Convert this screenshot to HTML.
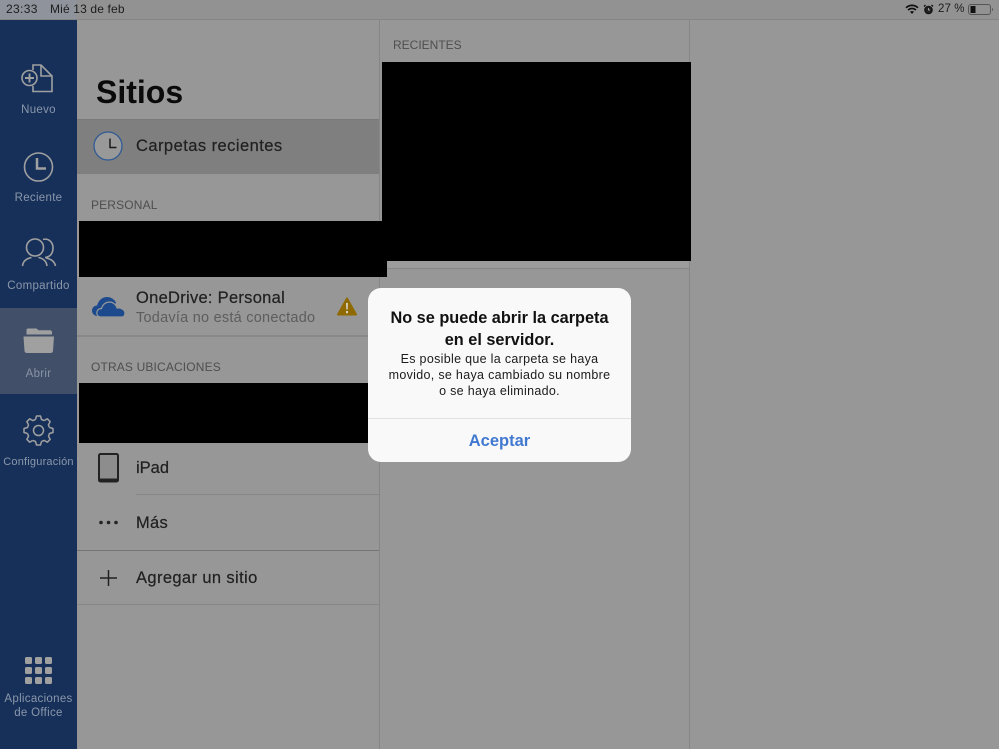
<!DOCTYPE html>
<html><head><meta charset="utf-8"><style>
html,body{margin:0;padding:0}
body{width:999px;height:749px;overflow:hidden;position:relative;background:#979797;font-family:"Liberation Sans",sans-serif;color:#1e1e1e}
.a{position:absolute;white-space:nowrap}
.side{left:0;top:20px;width:77px;height:729px;background:#16305a}
.lab{position:absolute;left:0;width:77px;text-align:center;font-size:11.5px;line-height:14px;color:#8b97aa;letter-spacing:.3px;white-space:nowrap}
.t{font-size:16.5px;line-height:20px;color:#202020;-webkit-text-stroke:.2px #202020}
.h{font-size:12px;line-height:14px;color:#4e4e4e;letter-spacing:.15px}
svg{position:absolute;overflow:visible}
</style></head><body>
<div class="a" style="left:0;top:0;width:999px;height:19px;background:#929292"></div>
<div class="a" style="left:0;top:0;width:77px;height:20px;background:#8f949c"></div>
<div class="a" style="left:0;top:19px;width:999px;height:1px;background:#858585"></div>
<div class="a" style="left:6px;top:2px;font-size:12px;line-height:14px;color:#1c1c1c;letter-spacing:.35px">23:33</div>
<div class="a" style="left:50px;top:2px;font-size:12px;line-height:14px;color:#1c1c1c;letter-spacing:.15px">Mié 13 de feb</div>
<div class="a" style="left:938px;top:2px;font-size:11.5px;line-height:14px;color:#1c1c1c;letter-spacing:.1px">27 %</div>
<svg style="left:905px;top:4px" width="14" height="11" viewBox="0 0 14 11"><path d="M1 3.800C4.500.6 9.500.6 13 3.800M3 6c2.500-2 5.500-2 8 0" fill="none" stroke="#111" stroke-width="1.700"/><path d="M5 7.800c1.200-.9 2.800-.9 4 0L7 10z" fill="#111"/></svg>
<svg style="left:923px;top:4px" width="11" height="11" viewBox="0 0 11 11"><circle cx="5.500" cy="6" r="3.700" fill="#222" stroke="#111" stroke-width="1.200"/><path d="M1 2.500 2.500 1M10 2.500 8.500 1" stroke="#111" stroke-width="1.400"/><path d="M5.500 4v2h1.500" stroke="#999" fill="none"/></svg>
<svg style="left:968px;top:4px" width="26" height="12" viewBox="0 0 26 12"><rect x=".5" y=".5" width="22" height="10" rx="2.500" fill="none" stroke="#555"/><rect x="2.500" y="2" width="5" height="7" fill="#111"/><path d="M24 4v3c.8-.3 1-.8 1-1.500s-.2-1.200-1-1.500z" fill="#555"/></svg>

<div class="a side"></div>
<div class="a" style="left:0;top:308px;width:77px;height:86px;background:#414f69"></div>
<svg style="left:0;top:0" width="77" height="300" viewBox="0 0 77 300" fill="none" stroke="#a0a0a0" stroke-width="1.600">
<path d="M33 70V65H41L52 76V91.500H33V86"/><path d="M41 65V76H52"/>
<circle cx="29.500" cy="78" r="7.500"/><path d="M29.500 73.500v9M25 78h9" stroke-width="1.900"/>
<circle cx="38.500" cy="167" r="14"/><path d="M37 158v10.500h9" stroke-width="2.500"/>
<circle cx="35" cy="247.500" r="8.500"/><path d="M43 239.500c5-1.500 10 2 10 8.500s-4 9-8 9.500"/>
<path d="M22.500 266c.5-5 4-7.500 9-8.500M38.500 257.500c5 1 8 4 8.500 8.500M46 258c4 .8 8.500 3 9.500 8"/>
</svg>
<div class="lab" style="top:103px">Nuevo</div>
<div class="lab" style="top:191px">Reciente</div>
<div class="lab" style="top:279px">Compartido</div>
<svg style="left:23px;top:328px" width="32" height="26" viewBox="0 0 32 26"><path d="M3.500 6.500V2Q3.500 .5 5 .5h8.500l2 1.800H27q2 0 2 2v2.200z" fill="#a0a0a0"/><path d="M.5 8.500h30.500l-1 14.500q-.2 2-2.500 2H4Q1.700 25 1.500 23z" fill="#a0a0a0"/></svg>
<div class="lab" style="top:367px;color:#8a93a5">Abrir</div>
<svg style="left:23px;top:415px" width="31" height="31" viewBox="-15.500 -15.500 31 31" fill="none" stroke="#a0a0a0" stroke-width="1.500" stroke-linejoin="round">
<path d="M-3-11-2-14.500H2L3-11 5.660-9.900"/>
<path d="M-3-11-2-14.500H2L3-11 5.660-9.900" transform="rotate(45)"/>
<path d="M-3-11-2-14.500H2L3-11 5.660-9.900" transform="rotate(90)"/>
<path d="M-3-11-2-14.500H2L3-11 5.660-9.900" transform="rotate(135)"/>
<path d="M-3-11-2-14.500H2L3-11 5.660-9.900" transform="rotate(180)"/>
<path d="M-3-11-2-14.500H2L3-11 5.660-9.900" transform="rotate(225)"/>
<path d="M-3-11-2-14.500H2L3-11 5.660-9.900" transform="rotate(270)"/>
<path d="M-3-11-2-14.500H2L3-11 5.660-9.900" transform="rotate(315)"/>
<circle r="5"/></svg>
<div class="lab" style="top:455px;font-size:11px;letter-spacing:.2px">Configuración</div>
<svg style="left:25px;top:657px" width="27" height="27" viewBox="0 0 27 27" fill="#a0a0a0"><rect width="7" height="7" rx="1.500"/><rect x="10" width="7" height="7" rx="1.500"/><rect x="20" width="7" height="7" rx="1.500"/><rect y="10" width="7" height="7" rx="1.500"/><rect x="10" y="10" width="7" height="7" rx="1.500"/><rect x="20" y="10" width="7" height="7" rx="1.500"/><rect y="20" width="7" height="7" rx="1.500"/><rect x="10" y="20" width="7" height="7" rx="1.500"/><rect x="20" y="20" width="7" height="7" rx="1.500"/></svg>
<div class="lab" style="top:692px">Aplicaciones<br>de Office</div>

<div class="a" style="left:379px;top:20px;width:1px;height:729px;background:#868686"></div>
<div class="a" style="left:689px;top:20px;width:1px;height:729px;background:#868686"></div>

<div class="a" style="left:96px;top:73px;font-size:32px;line-height:38px;font-weight:bold;color:#0a0a0a">Sitios</div>
<div class="a" style="left:77px;top:119px;width:302px;height:1px;background:#7a7a7a"></div>
<div class="a" style="left:77px;top:120px;width:302px;height:54px;background:#7f7f7f"></div>
<svg style="left:93px;top:131px" width="30" height="30" viewBox="0 0 30 30" fill="#999"><circle cx="15" cy="15" r="14" stroke="#2f5b96" stroke-width="1.300"/><path d="M17 7.500v9h6.500" fill="none" stroke="#1a1a1a" stroke-width="1.500"/></svg>
<div class="a t" style="left:136px;top:136px;letter-spacing:.45px">Carpetas recientes</div>
<div class="a h" style="left:91px;top:198px">PERSONAL</div>
<div class="a" style="left:79px;top:221px;width:308px;height:56px;background:#000"></div>

<svg style="left:92px;top:297px" width="33" height="20" viewBox="0 0 33 20" fill="#1d4a8c"><path d="M6 19C2 19 0 16.500 0 13.500 0 10.500 2.500 8.500 5 8.500 6.500 3.500 10 0 15 0 19 0 22 2 24 5.500L20 14 8 19z"/><path d="M9 20C6 20 4.800 18 4.800 16 4.800 13.500 6.500 11.500 9.500 11.500 10.500 7.500 14 5 17.500 5 21 5 24 7.500 25 11 29.500 10.500 33 13 33 16.500 33 18.500 31.500 20 29.500 20z" stroke="#979797" stroke-width="1.200"/></svg>
<div class="a t" style="left:136px;top:288px;letter-spacing:.28px">OneDrive: Personal</div>
<div class="a" style="left:136px;top:309px;font-size:14.5px;line-height:18px;color:#5d5d5d;letter-spacing:.24px">Todavía no está conectado</div>
<svg style="left:337px;top:297px" width="20" height="19" viewBox="0 0 20 19"><path d="M10 1.500 19 17.500H1z" fill="#8f6a00" stroke="#8f6a00" stroke-width="2" stroke-linejoin="round"/><path d="M9 6h2l-.3 6.500H9.300zM9 14h2v2.200H9z" fill="#d6d0c0"/></svg>
<div class="a" style="left:77px;top:335px;width:302px;height:2px;background:#888"></div>
<div class="a h" style="left:91px;top:360px">OTRAS UBICACIONES</div>
<div class="a" style="left:79px;top:383px;width:300px;height:60px;background:#000"></div>

<svg style="left:97px;top:453px" width="22" height="30" viewBox="0 0 22 30"><rect x="2" y="1" width="19" height="27.500" rx="1.500" fill="#8d8d8d" stroke="#222" stroke-width="2"/><rect y="25.500" x="2" width="19" height="3" fill="#222"/></svg>
<div class="a t" style="left:136px;top:458px">iPad</div>
<div class="a" style="left:136px;top:494px;width:243px;height:1px;background:#868686"></div>
<svg style="left:99px;top:520px" width="19" height="5" viewBox="0 0 19 5" fill="#222"><circle cx="2" cy="2.500" r="1.800"/><circle cx="9.500" cy="2.500" r="1.800"/><circle cx="17" cy="2.500" r="1.800"/></svg>
<div class="a t" style="left:136px;top:513px;letter-spacing:.3px">Más</div>
<div class="a" style="left:77px;top:550px;width:302px;height:1px;background:#747474"></div>
<svg style="left:100px;top:570px" width="17" height="17" viewBox="0 0 17 17"><path d="M8.500 0v16M0 8h17" stroke="#222" stroke-width="1.500"/></svg>
<div class="a t" style="left:136px;top:568px;letter-spacing:.38px">Agregar un sitio</div>
<div class="a" style="left:77px;top:604px;width:302px;height:1px;background:#868686"></div>

<div class="a h" style="left:393px;top:38px;letter-spacing:0">RECIENTES</div>
<div class="a" style="left:382px;top:62px;width:309px;height:199px;background:#000"></div>
<div class="a" style="left:387px;top:261px;width:302px;height:8px;background:#9c9c9c"></div>
<div class="a" style="left:387px;top:268px;width:302px;height:1px;background:#868686"></div>

<div class="a" style="left:368px;top:288px;width:263px;height:174px;border-radius:13px;background:#f9f9f9"></div>
<div class="a" style="left:368px;top:307px;width:263px;text-align:center;font-size:16.3px;line-height:22px;font-weight:bold;color:#111">No se puede abrir la carpeta<br>en el servidor.</div>
<div class="a" style="left:368px;top:351px;width:263px;text-align:center;font-size:12.5px;line-height:16px;color:#1c1c1c;letter-spacing:.31px">Es posible que la carpeta se haya<br>movido, se haya cambiado su nombre<br>o se haya eliminado.</div>
<div class="a" style="left:368px;top:418px;width:263px;height:1px;background:#e2e2e2"></div>
<div class="a" style="left:368px;top:431px;width:263px;text-align:center;font-size:16.5px;line-height:21px;font-weight:bold;color:#4179d0">Aceptar</div>
</body></html>
